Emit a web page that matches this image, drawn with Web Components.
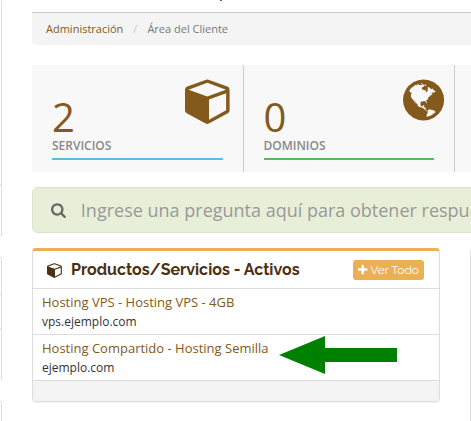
<!DOCTYPE html>
<html lang="es">
<head>
<meta charset="utf-8">
<title>Área del Cliente</title>
<style>
  body {
    margin: 0;
    background: #fff;
    color: #333;
    font-family: "Open Sans", "Noto Sans", sans-serif;
    font-size: 13px;
  }
</style>
</head>
<body>
<client-area>
  <side-panel slot="side" style="--rows: 184px 51px"></side-panel>
  <side-panel slot="side" style="--rows: 36px 34px 51px"></side-panel>
  <side-panel slot="side" style="--rows: 36px"></side-panel>

  <page-header></page-header>
  <bread-crumb current="Área del Cliente"><a href="#">Administración</a></bread-crumb>
  <stat-tiles>
    <stat-tile count="2" label="Servicios" icon="cube" color="#5bc0de"></stat-tile>
    <stat-tile count="0" label="Dominios" icon="globe" color="#5cb85c"></stat-tile>
    <stat-tile></stat-tile>
    <stat-tile></stat-tile>
  </stat-tiles>
  <kb-search placeholder="Ingrese una pregunta aquí para obtener respuestas"></kb-search>
  <panel-grid>
    <home-panel icon="cube">
      <span slot="title">Productos/Servicios - Activos</span>
      <service-row name="Hosting VPS - Hosting VPS - 4GB" domain="vps.ejemplo.com"></service-row>
      <service-row name="Hosting Compartido - Hosting Semilla" domain="ejemplo.com" marked></service-row>
    </home-panel>
    <blank-panel></blank-panel>
  </panel-grid>
</client-area>

<script>
// box is [left, width] of the glyph on the 1792 grid
const icons = {
  cube: {
    box: [64, 1792],
    path: "M896 1629l640-349v-636l-640 233v752zm-64-865l698-254-698-254-698 254zm832-252v768q0 35-18 65t-49 47l-704 384q-28 16-61 16t-61-16l-704-384q-31-17-49-47t-18-65v-768q0-40 23-73t61-47l704-256q22-8 44-8t44 8l704 256q38 14 61 47t23 73z",
    shift: 0,
  },
  globe: {
    box: [128, 1536],
    path: "M896 128q209 0 385.5 103t279.5 279.5 103 385.5-103 385.5-279.5 279.5-385.5 103-385.5-103-279.5-279.5-103-385.5 103-385.5 279.5-279.5 385.5-103zm274 521q-2 1-9.5 9.5t-13.5 9.5q2 0 4.5-5t5-11 3.5-7q6-7 22-15 14-6 52-12 34-8 51 11-2-2 9.5-13t14.5-12q3-2 15-4.5t15-7.5l2-22q-12 1-17.5-7t-6.5-21q0 2-6 8 0-7-4.5-8t-11.5 1-9 1q-10-3-15-7.5t-8-16.5-4-15q-2-5-9.5-11t-9.5-10q-1-2-2.5-5.5t-3-6.5-4-5.5-5.5-2.5-7 5-7.5 10-4.5 5q-3-2-6-1.5t-4.5 1-4.5 3-5 3.5q-3 2-8.5 3t-8.5 2q15-5-1-11-10-4-16-3 9-4 7.5-12t-8.5-14h5q-1-4-8.5-8.5t-17.5-8.5-13-6q-8-5-34-9.5t-33-.5q-5 6-4.5 10.5t4 14 3.5 12.5q1 6-5.5 13t-6.5 12q0 7 14 15.5t10 21.5q-3 8-16 16t-16 12q-5 8-1.5 18.5t10.5 16.5q2 2 1.5 4t-3.5 4.5-5.5 4-6.5 3.5l-3 2q-11 5-20.5-6t-13.5-26q-7-25-16-30-23-8-29 1-5-13-41-26-25-9-58-4 6-1 0-15-7-15-19-12 3-6 4-17.5t1-13.5q3-13 12-23 1-1 7-8.5t9.5-13.5.5-6q35 4 50-11 5-5 11.5-17t10.5-17q9-6 14-5.5t14.5 5.5 14.5 5q14 1 15.5-11t-7.5-20q12 1 3-17-4-7-8-9-12-4-27 5-8 4 2 8-1-1-9.5 10.5t-16.5 17.5-16-5q-1-1-5.5-13.5t-9.5-13.5q-8 0-16 15 3-8-11-15t-24-8q19-12-8-27-7-4-20.5-5t-19.5 4q-5 7-5.5 11.5t5 8 10.5 5.5 11.5 4 8.5 3q14 10 8 14-2 1-8.5 3.5t-11.5 4.5-6 4q-3 4 0 14t-2 14q-5-5-9-17.5t-7-16.5q7 9-25 6l-10-1q-4 0-16 2t-20.5 1-13.5-8q-4-8 0-20 1-4 4-2-4-3-11-9.5t-10-8.5q-46 15-94 41 6 1 12-1 5-2 13-6.5t10-5.5q34-14 42-7l5-5q14 16 20 25-7-4-30-1-20 6-22 12 7 12 5 18-4-3-11.5-10t-14.5-11-15-5q-16 0-22 1-146 80-235 222 7 7 12 8 4 1 5 9t2.5 11 11.5-3q9 8 3 19 1-1 44 27 19 17 21 21 3 11-10 18-1-2-9-9t-9-4q-3 5 .5 18.5t10.5 12.5q-7 0-9.5 16t-2.5 35.5-1 23.5l2 1q-3 12 5.5 34.5t21.5 19.5q-13 3 20 43 6 8 8 9 3 2 12 7.5t15 10 10 10.5q4 5 10 22.5t14 23.5q-2 6 9.5 20t10.5 23q-1 0-2.5 1t-2.5 1q3 7 15.5 14t15.5 13q1 3 2 10t3 11 8 2q2-20-24-62-15-25-17-29-3-5-5.5-15.5t-4.5-14.5q2 0 6 1.5t8.5 3.5 7.5 4 2 3q-3 7 2 17.5t12 18.5 17 19 12 13q6 6 14 19.5t0 13.5q9 0 20 10.5t17 19.5q5 8 8 26t5 24q2 7 8.5 13.5t12.5 9.5l16 8 13 7q5 2 18.5 10.5t21.5 11.5q10 4 16 4t14.5-2.5 13.5-3.5q15-2 29 15t21 21q36 19 55 11-2 1 .5 7.5t8 15.5 9 14.5 5.5 8.5q5 6 18 15t18 15q6-4 7-9-3 8 7 20t18 10q14-3 14-32-31 15-49-18 0-1-2.5-5.5t-4-8.5-2.5-8.5 0-7.5 5-3q9 0 10-3.5t-2-12.5-4-13q-1-8-11-20t-12-15q-5 9-16 8t-16-9q0 1-1.5 5.5t-1.5 6.5q-13 0-15-1 1-3 2.5-17.5t3.5-22.5q1-4 5.5-12t7.5-14.5 4-12.5-4.5-9.5-17.5-2.5q-19 1-26 20-1 3-3 10.5t-5 11.5-9 7q-7 3-24 2t-24-5q-13-8-22.5-29t-9.5-37q0-10 2.5-26.5t3-25-5.5-24.5q3-2 9-9.5t10-10.5q2-1 4.5-1.5t4.5 0 4-1.5 3-6q-1-1-4-3-3-3-4-3 7 3 28.5-1.5t27.5 1.5q15 11 22-2 0-1-2.5-9.5t-.5-13.5q5 27 29 9 3 3 15.5 5t17.5 5q3 2 7 5.5t5.5 4.5 5-.5 8.5-6.5q10 14 12 24 11 40 19 44 7 3 11 2t4.5-9.5 0-14-1.5-12.5l-1-8v-18l-1-8q-15-3-18.5-12t1.5-18.5 15-18.5q1-1 8-3.5t15.5-6.5 12.5-8q21-19 15-35 7 0 11-9-1 0-5-3t-7.5-5-4.5-2q9-5 2-16 5-3 7.5-11t7.5-10q9 12 21 2 8-8 1-16 5-7 20.5-10.5t18.5-9.5q7 2 8-2t1-12 3-12q4-5 15-9t13-5l17-11q3-4 0-4 18 2 31-11 10-11-6-20 3-6-3-9.5t-15-5.5q3-1 11.5-.5t10.5-1.5q15-10-7-16-17-5-43 12zm-163 877q206-36 351-189-3-3-12.5-4.5t-12.5-3.5q-18-7-24-8 1-7-2.5-13t-8-9-12.5-8-11-7q-2-2-7-6t-7-5.5-7.5-4.5-8.5-2-10 1l-3 1q-3 1-5.5 2.5t-5.5 3-4 3 0 2.5q-21-17-36-22-5-1-11-5.5t-10.5-7-10-1.5-11.5 7q-5 5-6 15t-2 13q-7-5 0-17.5t2-18.5q-3-6-10.5-4.5t-12 4.5-11.5 8.5-9 6.5-8.5 5.5-8.5 7.5q-3 4-6 12t-5 11q-2-4-11.5-6.5t-9.5-5.5q2 10 4 35t5 38q7 31-12 48-27 25-29 40-4 22 12 26 0 7-8 20.5t-7 21.5q0 6 2 16z",
  },
  search: {
    box: [64, 1664],
    path: "M1216 832q0-185-131.5-316.5t-316.5-131.5-316.5 131.5-131.5 316.5 131.5 316.5 316.5 131.5 316.5-131.5 131.5-316.5zm512 832q0 52-38 90t-90 38q-54 0-90-38l-343-342q-179 124-399 124-143 0-273.5-55.5t-225-150-150-225-55.5-273.5 55.5-273.5 150-225 225-150 273.5-55.5 273.5 55.5 225 150 150 225 55.5 273.5q0 220-124 399l343 343q37 37 37 90z",
  },
  plus: {
    box: [192, 1408],
    path: "M1600 736v192q0 40-28 68t-68 28h-416v416q0 40-28 68t-68 28h-192q-40 0-68-28t-28-68v-416h-416q-40 0-68-28t-28-68v-192q0-40 28-68t68-28h416v-416q0-40 28-68t68-28h192q40 0 68 28t28 68v416h416q40 0 68 28t28 68z",
  },
};
// the cube is drawn from x = 0
icons.cube.box[0] = 0;

class BaseElement extends HTMLElement {
  connectedCallback() {
    if (this.shadowRoot) return;
    this._root = this.attachShadow({ mode: "open" });
    const template = document.createElement("template");
    template.innerHTML = this.render();
    this._root.appendChild(template.content.cloneNode(true));
  }

  attr(name) {
    return this.getAttribute(name) || "";
  }
}

class FaIcon extends BaseElement {
  render() {
    const { box, path } = icons[this.attr("name")];
    return `
      <style>
        :host { display: block; flex: none; height: var(--size, 16px); }
        svg { display: block; height: 100%; fill: currentColor; overflow: visible; }
      </style>
      <svg viewBox="${box[0]} 0 ${box[1]} 1792" aria-hidden="true"><path d="${path}"/></svg>
    `;
  }
}

class ClientArea extends BaseElement {
  render() {
    return `
      <style>
        :host { display: flex; gap: 30px; height: 100vh; overflow: hidden; }
        aside {
          flex: none;
          width: 2px;
          overflow: hidden;
          display: flex;
          flex-direction: column;
          gap: 21px;
        }
        main { flex: 1 0 846px; }
      </style>
      <aside><slot name="side"></slot></aside>
      <main><slot></slot></main>
    `;
  }
}

// only the right edge of the collapsed sidebar shows
class SidePanel extends BaseElement {
  render() {
    const rows = getComputedStyle(this).getPropertyValue("--rows").trim().split(" ");
    return `
      <style>
        :host {
          display: grid;
          flex: none;
          grid-template-rows: var(--rows);
          border: 1px solid #ddd;
          border-left: 0;
          border-radius: 0 3px 3px 0;
        }
        :host(:first-of-type) { border-top: 0; }
        div + div { border-top: 1px solid #ddd; }
      </style>
      ${rows.map(() => "<div></div>").join("")}
    `;
  }
}

class PageHeader extends BaseElement {
  render() {
    return `
      <style>
        :host { display: block; height: 12px; border-bottom: 1px solid #ccc; }
        div { width: 2px; height: 1px; margin-left: 188px; background: #6b5847; }
      </style>
      <div></div>
    `;
  }
}

class BreadCrumb extends BaseElement {
  render() {
    return `
      <style>
        :host {
          display: block;
          padding: 8px 14px;
          margin-bottom: 20px;
          background: #f4f4f4;
          border-radius: 0 0 4px 4px;
          font-size: 11px;
          line-height: 16px;
          color: #777;
        }
        nav { display: flex; }
        ::slotted(a) { color: #84591c; text-decoration: none; }
        .sep { padding: 0 10px; color: #ccc; }
      </style>
      <nav><slot></slot><span class="sep">/</span><span>${this.attr("current")}</span></nav>
    `;
  }
}

class StatTiles extends BaseElement {
  render() {
    return `
      <style>
        :host { display: grid; grid-template-columns: repeat(4, 1fr); margin-bottom: 15px; }
        ::slotted(:not(:last-child)) { border-right: 1px solid #ccc; }
      </style>
      <slot></slot>
    `;
  }
}

class StatTile extends BaseElement {
  render() {
    const style = `
      <style>
        :host {
          display: block;
          box-sizing: border-box;
          height: 107px;
          padding: 11px 10px 0 20px;
          background: #f8f8f8;
        }
        a { display: block; color: #84591c; text-decoration: none; }
        .top { display: flex; justify-content: space-between; height: 63px; }
        fa-icon { --size: 48px; }
        .count { align-self: flex-end; font-size: 40px; line-height: 44px; font-weight: 400; }
        .label { font-size: 12px; line-height: 14px; color: #888; text-transform: uppercase; font-weight: 600; }
        .bar { height: 2px; margin: 5px 10px 0 0; background: ${this.attr("color")}; }
      </style>
    `;
    if (!this.attr("label")) return style;
    return `
      ${style}
      <a href="#">
        <div class="top">
          <span class="count">${this.attr("count")}</span>
          <fa-icon name="${this.attr("icon")}"></fa-icon>
        </div>
        <div class="label">${this.attr("label")}</div>
        <div class="bar"></div>
      </a>
    `;
  }
}

class KbSearch extends BaseElement {
  render() {
    return `
      <style>
        :host {
          display: flex;
          align-items: center;
          gap: 15px;
          box-sizing: border-box;
          height: 46px;
          padding: 0 18px;
          margin-bottom: 15px;
          background: #e8efd8;
          border: 1px solid #dbe4c8;
          border-radius: 6px;
          color: #666;
        }
        input {
          flex: 1;
          padding: 0;
          border: 0;
          outline: none;
          background: none;
          font-family: inherit;
          font-size: 18px;
          line-height: 24px;
        }
        input::placeholder { color: #999; opacity: 1; }
      </style>
      <fa-icon name="search"></fa-icon>
      <input type="text" aria-label="Buscar" placeholder="${this.attr("placeholder")}">
    `;
  }
}

class PanelGrid extends BaseElement {
  render() {
    return `
      <style>
        :host { display: grid; grid-template-columns: 1fr 1fr; align-items: start; gap: 30px; }
      </style>
      <slot></slot>
    `;
  }
}

class HomePanel extends BaseElement {
  render() {
    return `
      <style>
        :host {
          display: block;
          border: 1px solid #ddd;
          border-top: 3px solid #ebaf54;
          border-radius: 4px;
          box-shadow: 0 1px 1px rgba(0, 0, 0, 0.05);
        }
        header {
          display: flex;
          align-items: center;
          height: 37px;
          padding: 0 15px 0 14px;
        }
        header fa-icon { margin-right: 8px; color: #4a3014; }
        h3 {
          flex: 1;
          margin: 0;
          font-family: Raleway, Lato, sans-serif;
          font-size: 16px;
          line-height: 20px;
          font-weight: 700;
          color: #4a3014;
        }
        button {
          display: flex;
          align-items: center;
          height: 20px;
          padding: 0 5px;
          border: 0;
          border-radius: 3px;
          background: #ebaf54;
          color: #fff;
          font-family: Raleway, Lato, sans-serif;
          font-size: 12px;
          line-height: 18px;
        }
        button fa-icon { --size: 12px; margin: 0 3px 0 0; color: #fff; }
        footer { height: 20px; background: #f4f4f4; border-top: 1px solid #ddd; }
      </style>
      <header>
        <fa-icon name="${this.attr("icon")}"></fa-icon>
        <h3><slot name="title"></slot></h3>
        <button type="button"><fa-icon name="plus"></fa-icon>Ver Todo</button>
      </header>
      <slot></slot>
      <footer></footer>
    `;
  }
}

class BlankPanel extends BaseElement {
  render() {
    return `
      <style>
        :host { display: block; border: 1px solid #ddd; border-radius: 4px; height: 300px; }
      </style>
    `;
  }
}

class ServiceRow extends BaseElement {
  render() {
    const arrow = `
      <svg width="118" height="38" viewBox="0 0 118 38" aria-hidden="true">
        <path fill="#008000" d="M0 19L46 0V12H118V26H46V38z"/>
      </svg>
    `;
    return `
      <style>
        :host {
          display: flex;
          align-items: center;
          gap: 10px;
          height: 45px;
          padding-left: 9px;
          border-top: 1px solid #ddd;
        }
        a { color: #84591c; text-decoration: none; line-height: 19px; }
        span { display: block; color: #333; font-size: 12px; line-height: 19px; }
        svg { margin-bottom: 5px; }
      </style>
      <a href="#">${this.attr("name")}<span>${this.attr("domain")}</span></a>
      ${this.hasAttribute("marked") ? arrow : ""}
    `;
  }
}

window.customElements.define("fa-icon", FaIcon);
window.customElements.define("client-area", ClientArea);
window.customElements.define("side-panel", SidePanel);
window.customElements.define("page-header", PageHeader);
window.customElements.define("bread-crumb", BreadCrumb);
window.customElements.define("stat-tiles", StatTiles);
window.customElements.define("stat-tile", StatTile);
window.customElements.define("kb-search", KbSearch);
window.customElements.define("panel-grid", PanelGrid);
window.customElements.define("home-panel", HomePanel);
window.customElements.define("blank-panel", BlankPanel);
window.customElements.define("service-row", ServiceRow);
</script>
</body>
</html>
